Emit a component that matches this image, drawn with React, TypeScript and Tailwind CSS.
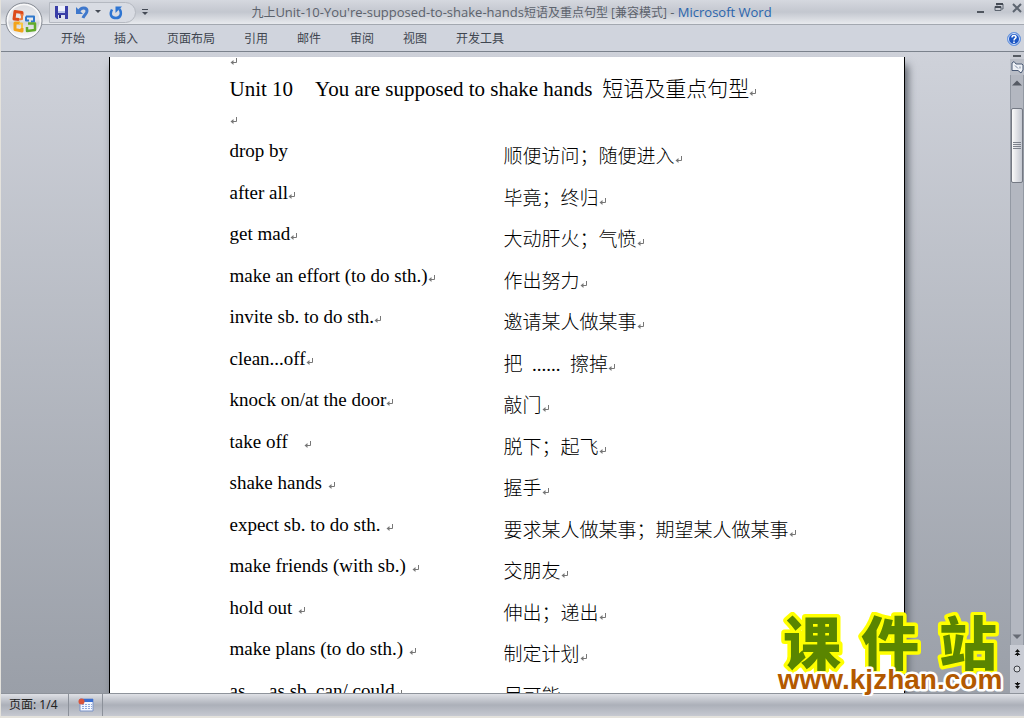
import type { ReactNode } from "react";

interface Phrase {
  en: string;
  zh: string;
  gap?: string;
  noMark?: boolean;
}

const tabs = ["开始", "插入", "页面布局", "引用", "邮件", "审阅", "视图", "开发工具"];

const phrases: Phrase[] = [
  { en: "drop by", zh: "顺便访问；随便进入", noMark: true },
  { en: "after all", zh: "毕竟；终归" },
  { en: "get mad", zh: "大动肝火；气愤" },
  { en: "make an effort (to do sth.)", zh: "作出努力" },
  { en: "invite sb. to do sth.", zh: "邀请某人做某事" },
  { en: "clean...off", zh: "把  ......  擦掉" },
  { en: "knock on/at the door", zh: "敲门" },
  { en: "take off", zh: "脱下；起飞", gap: "ml-4" },
  { en: "shake hands", zh: "握手", gap: "ml-1.5" },
  { en: "expect sb. to do sth.", zh: "要求某人做某事；期望某人做某事", gap: "ml-1.5" },
  { en: "make friends (with sb.)", zh: "交朋友", gap: "ml-1.5" },
  { en: "hold out", zh: "伸出；递出", gap: "ml-1.5" },
  { en: "make plans (to do sth.)", zh: "制定计划", gap: "ml-1.5" },
  { en: "as ... as sb. can/ could", zh: "尽可能" },
];

function ParagraphMark({ className = "" }: { className?: string }) {
  return (
    <svg width="8" height="8" viewBox="0 0 8 8" className={`inline-block align-baseline ${className}`} aria-hidden="true">
      <path d="M6.5 1v4.5H1" fill="none" stroke="#777" />
      <path d="M3.500 3v5L.500 5.500z" fill="#777" />
    </svg>
  );
}

function OfficeLogo() {
  return (
    <svg width="40" height="40" viewBox="0 0 40 40" aria-hidden="true">
      <defs>
        <linearGradient id="orb" x1="0" y1="0" x2="0" y2="1">
          <stop offset="0" stopColor="#d9dbe0" />
          <stop offset="0.45" stopColor="#e9eaed" />
          <stop offset="0.55" stopColor="#d3d5da" />
          <stop offset="1" stopColor="#ffffff" />
        </linearGradient>
      </defs>
      <circle cx="20" cy="21" r="18" fill="url(#orb)" stroke="#858a93" />
      <circle cx="20" cy="21" r="16.500" fill="none" stroke="#fff" strokeOpacity="0.8" strokeWidth="1.500" />
      <g fill="none" strokeWidth="3" strokeLinejoin="round">
        <path d="M15 19.500l-5-.500 1-7.500 7 1v3" stroke="#dd4a1a" />
        <path d="M18 14v5l-3 .500" stroke="#ee7a3a" strokeWidth="2" />
        <path d="M22 16.500h8v5h-3M22 16.500v4h3" stroke="#2f78cc" strokeWidth="2" />
        <path d="M16 23h-5v6.500l7 1.500v-3" stroke="#f3a31a" />
        <path d="M18 28v-4.500h-3" stroke="#f8c640" strokeWidth="2" />
        <path d="M24 23.500h7v6.500l-8 1v-4" stroke="#62ab2a" strokeWidth="2.500" />
      </g>
    </svg>
  );
}

function IconButton({ label, className = "", children }: { label: string; className?: string; children: ReactNode }) {
  return (
    <button type="button" aria-label={label} className={`flex items-center justify-center ${className}`}>
      {children}
    </button>
  );
}

function TitleBar() {
  return (
    <header className="flex h-[25px] shrink-0 items-center border-b border-[#a3a8b0] bg-linear-to-b from-[#d5d8df] via-[#c3c7cf] to-[#e8eaee]">
      <div className="flex flex-1 items-center">
        <div className="ml-12 flex h-[21px] items-center rounded-r-full border border-[#b5b9c1] bg-[#d9dce3] pr-3 pl-1">
          <IconButton label="保存">
            <svg width="15" height="15" viewBox="0 0 15 15">
              <path d="M1 1h13v13H3l-2-2z" fill="#3a3fa8" />
              <path d="M4 1h7v7H4z" fill="#eef1fb" />
              <path d="M4 6h7v2H4z" fill="#b8c4ea" />
              <path d="M4 10h7v4H4z" fill="#dde1ee" />
              <path d="M5 10h2v3H5z" fill="#25297c" />
            </svg>
          </IconButton>
          <IconButton label="撤消" className="ml-1.5">
            <svg width="14" height="15" viewBox="0 0 14 15">
              <path d="M4 6c2-4 8-4 8 0 0 3-3 4-4 7" fill="none" stroke="#3f78cc" strokeWidth="3" />
              <path d="M1 2v7h7z" fill="#3f78cc" />
            </svg>
          </IconButton>
          <IconButton label="撤消列表" className="ml-1.5">
            <svg width="6" height="4" viewBox="0 0 6 4">
              <path d="M0 0h6L3 3z" fill="#444a55" />
            </svg>
          </IconButton>
          <IconButton label="重复" className="ml-2">
            <svg width="14" height="15" viewBox="0 0 14 15">
              <path d="M3 4.500c-3 6 0 8.500 4 8.500 5 0 6-5 3.500-9" fill="none" stroke="#2e75d2" strokeWidth="2.500" />
              <path d="M6.500 8V1.500H13z" fill="#2e75d2" />
            </svg>
          </IconButton>
        </div>
        <IconButton label="自定义快速访问工具栏" className="ml-1.5">
          <svg width="6" height="7" viewBox="0 0 6 7">
            <path d="M0 .500h6" stroke="#444a55" />
            <path d="M0 3h6L3 6z" fill="#444a55" />
          </svg>
        </IconButton>
      </div>
      <h1 className="font-['Open_Sans','Noto_Sans_CJK_SC',sans-serif] text-[13px] leading-5 whitespace-pre text-[#5c626c]">
        <span className="text-xs">九上</span>Unit-10-You're-supposed-to-shake-hands
        <span className="text-xs">短语及重点句型 [兼容模式]</span> - <span className="text-[#2a65ad]">Microsoft Word</span>
      </h1>
      <div className="flex flex-1 items-center justify-end gap-2 pr-0.5 pb-2">
        <IconButton label="最小化">
          <svg width="10" height="10" viewBox="0 0 10 10">
            <path d="M1 8h7v2H1z" fill="#50565f" />
          </svg>
        </IconButton>
        <IconButton label="还原">
          <svg width="10" height="10" viewBox="0 0 10 10">
            <path d="M3 2.500V1h6v5H7.500M1 3.500h6v4H1z" fill="none" stroke="#5d6570" />
            <path d="M2 1h7M1 4h6" stroke="#454b55" strokeWidth="2" />
          </svg>
        </IconButton>
        <IconButton label="关闭">
          <svg width="10" height="10" viewBox="0 0 10 10">
            <path d="M1 1l8 8M9 1L1 9" stroke="#5d6570" strokeWidth="2" />
          </svg>
        </IconButton>
      </div>
    </header>
  );
}

function RibbonTabs() {
  return (
    <nav className="flex h-[27px] shrink-0 items-center gap-[29px] border-b border-[#7b828c] bg-[#d0d4dd] pt-0.5 pl-[60px] text-xs text-[#3f4650]">
      {tabs.map((tab) => (
        <button key={tab} type="button" className="shrink-0">
          {tab}
        </button>
      ))}
      <IconButton label="帮助" className="mr-[3px] ml-auto">
        <svg width="14" height="14" viewBox="0 0 14 14">
          <circle cx="7" cy="7" r="6.500" fill="#1c56c4" stroke="#6f9be0" />
          <circle cx="7" cy="7" r="5.500" fill="none" stroke="#d6e4fb" />
          <path d="M5 5.500c0-3 4-2.500 4-.300C9 6.500 7 6.500 7 8.500" fill="none" stroke="#fff" strokeWidth="1.500" />
          <path d="M6.200 9.500h1.600V11H6.200z" fill="#fff" />
        </svg>
      </IconButton>
    </nav>
  );
}

function DocumentPage() {
  return (
    <article className="w-[796px] shrink-0 overflow-hidden border-x border-black bg-white px-[120px] font-['Liberation_Serif','Noto_Sans_CJK_SC',serif] text-black shadow-[3px_8px_8px_#5c616a]">
      <p className="flex h-4 items-start">
        <ParagraphMark />
      </p>
      <h2 className="h-8 text-[21px] leading-8 font-light whitespace-nowrap">
        Unit 10<span className="ml-[22px]">You are supposed to shake hands</span>
        <span className="ml-2.5">短语及重点句型</span>
        <ParagraphMark />
      </h2>
      <p className="flex h-[29px] items-center">
        <ParagraphMark />
      </p>
      <table className="w-full table-fixed border-collapse text-[19px] font-light">
        <tbody>
          {phrases.map((p) => (
            <tr key={p.en} className="odd:h-[42px] even:h-[41px]">
              <td className="w-[274px] p-0 pb-2 align-middle leading-6 whitespace-nowrap">
                {p.en}
                {!p.noMark && <ParagraphMark className={p.gap} />}
              </td>
              <td className="p-0 pt-1 align-middle leading-6 whitespace-pre">
                {p.zh}
                <ParagraphMark />
              </td>
            </tr>
          ))}
        </tbody>
      </table>
    </article>
  );
}

function ScrollBar() {
  return (
    <aside className="flex w-[14px] shrink-0 flex-col bg-[#c9ccd4]">
      <div className="mx-[3px] mt-[3px] h-0.5 shrink-0 bg-[#555a62]" />
      <IconButton label="标尺" className="mt-0.5 h-4 w-full shrink-0 bg-[#b9bdc6]">
        <svg width="13" height="13" viewBox="0 0 13 13">
          <path d="M1 2l2-1.500L5 3h6l1 1v5l-2 3-3-2.500H1z" fill="#eef1f6" stroke="#4a5a75" />
          <path d="M4 4.500l3 3M9 5.500v2" stroke="#7886a0" />
        </svg>
      </IconButton>
      <div className="flex min-h-0 flex-1 flex-col border-x border-[#9399a3] bg-[#b3b7c0]">
        <IconButton label="向上滚动" className="h-4 shrink-0">
          <svg width="10" height="6" viewBox="0 0 10 6">
            <path d="M0 5.500l5-5 5 5z" fill="#555a63" />
          </svg>
        </IconButton>
        <div className="mt-[17px] flex h-[75px] shrink-0 flex-col items-center justify-center gap-px rounded-xs border border-[#747983] bg-linear-to-r from-[#fafafa] to-[#c3c7d0]">
          <span className="h-px w-2 bg-[#7d828c]" />
          <span className="h-px w-2 bg-[#7d828c]" />
          <span className="h-px w-2 bg-[#7d828c]" />
          <span className="h-px w-2 bg-[#7d828c]" />
        </div>
        <IconButton label="向下滚动" className="mt-auto h-4 shrink-0">
          <svg width="10" height="6" viewBox="0 0 10 6">
            <path d="M.500 .500L5 5l4.500-4.500z" fill="#666b74" />
          </svg>
        </IconButton>
      </div>
      <IconButton label="前一页" className="h-4 shrink-0">
        <svg width="7" height="8" viewBox="0 0 7 8">
          <path d="M3.500 0L6 3H1zM3.500 3L6.500 6H.500zM3 6h1v1H3z" fill="#111" />
        </svg>
      </IconButton>
      <IconButton label="选择浏览对象" className="h-4 shrink-0">
        <svg width="8" height="8" viewBox="0 0 8 8">
          <circle cx="4" cy="4" r="3" fill="#d9dbdf" stroke="#3b3e44" />
        </svg>
      </IconButton>
      <IconButton label="下一页" className="h-4 shrink-0">
        <svg width="7" height="8" viewBox="0 0 7 8">
          <path d="M3.500 8L6 5H1zM3.500 5L6.500 2H.500zM3 1h1v1H3z" fill="#111" />
        </svg>
      </IconButton>
    </aside>
  );
}

function StatusBar() {
  return (
    <footer className="flex h-[23px] shrink-0 items-stretch border-t border-[#8e939b] bg-linear-to-b from-[#dfe1e6] via-[#acb0b9] to-[#c6c9d1] text-xs text-[#222]">
      <div className="flex w-[68px] items-center border-r border-[#8c919a] pl-2">页面: 1/4</div>
      <div className="flex w-[34px] items-center justify-center border-r border-[#8c919a]">
        <IconButton label="宏录制">
          <svg width="16" height="14" viewBox="0 0 16 14">
            <path d="M2 1h13v12H2z" fill="#f4f7ff" stroke="#7a93c8" />
            <path d="M2 1h13v3H2z" fill="#3a6ed0" />
            <path d="M4 6.500h10M4 8.500h10M4 10.500h10" stroke="#8fa9dc" strokeDasharray="2 1" />
            <circle cx="3.500" cy="3.500" r="3" fill="#d9533a" />
          </svg>
        </IconButton>
      </div>
    </footer>
  );
}

function SiteBadge() {
  return (
    <a href="#" aria-label="课件站 www.kjzhan.com" className="absolute right-[18px] bottom-5">
      <svg width="232" height="84" viewBox="0 0 232 84" strokeLinejoin="round">
        <g
          textAnchor="middle" fontSize="58" fontWeight="900" paintOrder="stroke"
          fill="#5a8500" stroke="#ffff00" strokeWidth="7" className="font-['Noto_Sans_CJK_SC',sans-serif]"
        >
          <text x="38" y="53">课</text>
          <text x="116" y="53">件</text>
          <text x="194" y="53">站</text>
        </g>
        <text
          x="116" y="77" textAnchor="middle" fontSize="28" fontWeight="700" paintOrder="stroke"
          fill="#b35900" stroke="#fff" strokeWidth="5" className="font-['Liberation_Sans',sans-serif]"
        >
          www.kjzhan.com
        </text>
      </svg>
    </a>
  );
}

export default function App() {
  return (
    <div className="relative flex h-screen flex-col overflow-hidden border-b-2 border-l border-[#e4e2dc] bg-[#d0d4dd] font-['Noto_Sans','Noto_Sans_CJK_SC',sans-serif]">
      <TitleBar />
      <RibbonTabs />
      <IconButton label="Office 按钮" className="absolute top-0 left-[3px]">
        <OfficeLogo />
      </IconButton>
      <div className="flex min-h-0 flex-1">
        <main className="flex min-w-0 flex-1 justify-center overflow-hidden bg-linear-to-b from-[#cfd2da] to-[#9a9fa8] pt-[5px] pl-0.5">
          <DocumentPage />
        </main>
        <ScrollBar />
      </div>
      <StatusBar />
      <SiteBadge />
    </div>
  );
}
